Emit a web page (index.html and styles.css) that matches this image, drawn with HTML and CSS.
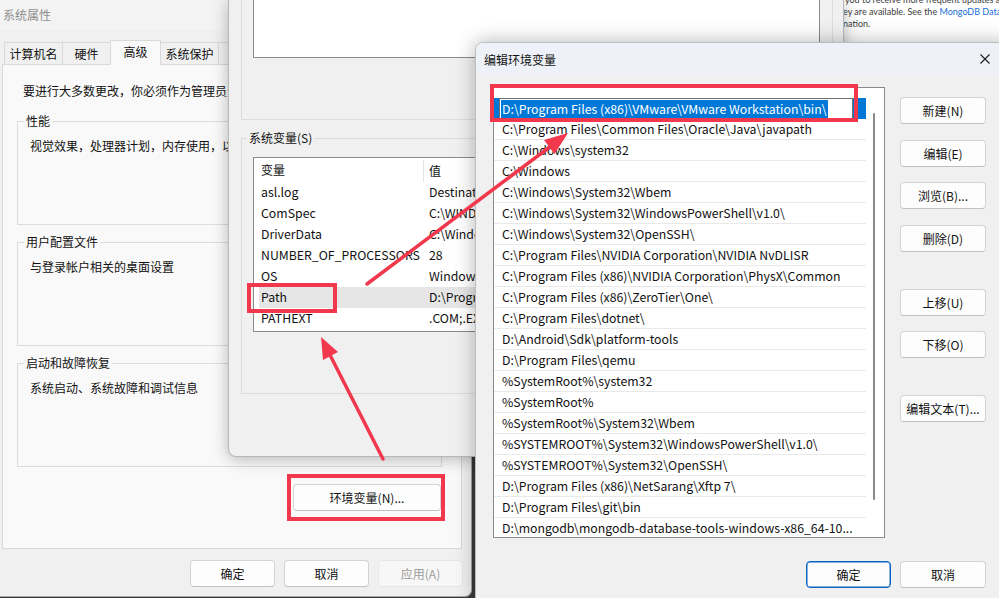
FILE: index.html
```html
<!DOCTYPE html>
<html lang="zh-CN">
<head>
<meta charset="utf-8">
<title>编辑环境变量</title>
<link rel="stylesheet" href="styles.css">
</head>
<body>
<div class="desk">

  <div class="win sys">
    <div class="sys-title">系统属性</div>
    <div class="tabs">
      <div class="tab t1">计算机名</div>
      <div class="tab t2">硬件</div>
      <div class="tab t3 active">高级</div>
      <div class="tab t4">系统保护</div>
      <div class="tab t5">远程</div>
    </div>
    <div class="panel">
      <div class="intro">要进行大多数更改，你必须作为管理员登录。</div>
      <div class="group first">
        <div class="legend">性能</div>
        <div class="gtext">视觉效果，处理器计划，内存使用，以及虚拟内存</div>
      </div>
      <div class="group">
        <div class="legend">用户配置文件</div>
        <div class="gtext">与登录帐户相关的桌面设置</div>
      </div>
      <div class="group">
        <div class="legend">启动和故障恢复</div>
        <div class="gtext">系统启动、系统故障和调试信息</div>
      </div>
      <div class="env-row">
        <div class="btn envbtn">环境变量(N)...</div>
      </div>
    </div>
    <div class="sys-foot">
      <div class="btn w85">确定</div>
      <div class="btn w85">取消</div>
      <div class="btn w85 disabled">应用(A)</div>
    </div>
  </div>

  <div class="win web">
    <div class="wl wl1">you to receive more frequent updates and</div>
    <div class="wl">ey are available. See the <span class="lnk">MongoDB Databa</span></div>
    <div class="wl">nation.</div>
  </div>

  <div class="win env">
    <div class="ugroup">
      <div class="ulist"></div>
    </div>
    <div class="sgroup">
      <div class="legend">系统变量(S)</div>
      <div class="slist">
        <div class="shead">
          <div class="c1">变量</div>
          <div class="c2">值</div>
        </div>
        <div class="srow"><div class="c1">asl.log</div><div class="c2">Destination=file</div></div>
        <div class="srow"><div class="c1">ComSpec</div><div class="c2">C:\WINDOWS\system32\cmd.exe</div></div>
        <div class="srow"><div class="c1">DriverData</div><div class="c2">C:\Windows\System32\Drivers\DriverData</div></div>
        <div class="srow"><div class="c1">NUMBER_OF_PROCESSORS</div><div class="c2">28</div></div>
        <div class="srow"><div class="c1">OS</div><div class="c2">Windows_NT</div></div>
        <div class="srow sel-row"><div class="c1">Path</div><div class="c2">D:\Program Files (x86)\VMware\VMware Workstation\bin\</div></div>
        <div class="srow"><div class="c1">PATHEXT</div><div class="c2">.COM;.EXE;.BAT;.CMD;.VBS;.VBE;.JS</div></div>
      </div>
    </div>
  </div>

  <div class="win edit">
    <div class="edit-title">
      <div class="etitle">编辑环境变量</div>
      <svg class="close" width="10" height="10" viewBox="0 0 10 10"><path d="M0.5 0.5 L9.5 9.5 M9.5 0.5 L0.5 9.5" stroke="#1b1b1b" stroke-width="1.1" fill="none"/></svg>
    </div>
    <div class="edit-main">
      <div class="plist">
        <div class="prows">
          <div class="prow editing"><div class="editbox"><span class="seltext">D:\Program Files (x86)\VMware\VMware Workstation\bin\</span></div></div>
          <div class="prow">C:\Program Files\Common Files\Oracle\Java\javapath</div>
          <div class="prow">C:\Windows\system32</div>
          <div class="prow">C:\Windows</div>
          <div class="prow">C:\Windows\System32\Wbem</div>
          <div class="prow">C:\Windows\System32\WindowsPowerShell\v1.0\</div>
          <div class="prow">C:\Windows\System32\OpenSSH\</div>
          <div class="prow">C:\Program Files\NVIDIA Corporation\NVIDIA NvDLISR</div>
          <div class="prow">C:\Program Files (x86)\NVIDIA Corporation\PhysX\Common</div>
          <div class="prow">C:\Program Files (x86)\ZeroTier\One\</div>
          <div class="prow">C:\Program Files\dotnet\</div>
          <div class="prow">D:\Android\Sdk\platform-tools</div>
          <div class="prow">D:\Program Files\qemu</div>
          <div class="prow">%SystemRoot%\system32</div>
          <div class="prow">%SystemRoot%</div>
          <div class="prow">%SystemRoot%\System32\Wbem</div>
          <div class="prow">%SYSTEMROOT%\System32\WindowsPowerShell\v1.0\</div>
          <div class="prow">%SYSTEMROOT%\System32\OpenSSH\</div>
          <div class="prow">D:\Program Files (x86)\NetSarang\Xftp 7\</div>
          <div class="prow">D:\Program Files\git\bin</div>
          <div class="prow">D:\mongodb\mongodb-database-tools-windows-x86_64-10...</div>
        </div>
        <div class="pscroll"></div>
      </div>
      <div class="ebtns">
        <div class="btn eb">新建(N)</div>
        <div class="btn eb m16">编辑(E)</div>
        <div class="btn eb m15">浏览(B)...</div>
        <div class="btn eb m16">删除(D)</div>
        <div class="btn eb m37">上移(U)</div>
        <div class="btn eb m15">下移(O)</div>
        <div class="btn eb m37">编辑文本(T)...</div>
      </div>
    </div>
    <div class="efoot">
      <div class="btn w85 primary">确定</div>
      <div class="btn w86">取消</div>
    </div>
  </div>

  <svg class="annot" width="999" height="598" viewBox="0 0 999 598">
    <g fill="none" stroke="#f2384c" stroke-width="4">
      <rect x="289" y="476" width="154" height="43"/>
      <rect x="249" y="285" width="86" height="26"/>
      <rect x="492" y="86" width="364" height="34"/>
    </g>
    <g stroke="#f2384c" stroke-width="3.5" stroke-linecap="round">
      <line x1="367" y1="284" x2="551" y2="146"/>
      <line x1="383" y1="459" x2="330" y2="355"/>
    </g>
    <g fill="#f2384c">
      <polygon points="568,133 554.5,154 544,140"/>
      <polygon points="321,337 338,352 323,360"/>
    </g>
  </svg>
</div>
</body>
</html>
```

FILE: styles.css
```css
* {
  box-sizing: border-box;
  margin: 0;
  padding: 0;
}

body {
  margin: 0;
  width: 999px;
  height: 598px;
  overflow: hidden;
  background: #3a3a3a;
  font-family: "Microsoft YaHei UI", "Noto Sans CJK SC", sans-serif;
  font-size: 12px;
  color: #111;
}

.desk {
  position: relative;
  width: 999px;
  height: 598px;
  overflow: hidden;
}

.win {
  position: absolute;
}

/* ---------- System properties ---------- */
.sys {
  left: 0;
  top: 0;
  width: 472px;
  height: 597px;
  background: #f0f0f0;
  border-right: 1px solid #a5a5a5;
  border-bottom: 1px solid #a5a5a5;
  border-radius: 0 0 7px 0;
}

.sys-title {
  height: 30px;
  line-height: 30px;
  padding-left: 3px;
  color: #8e8e8e;
  background: #f3f3f3;
}

.tabs {
  display: flex;
  align-items: flex-end;
  height: 34px;
  padding-left: 4px;
}

.tab {
  height: 22px;
  line-height: 21px;
  border: 1px solid #d9d9d9;
  border-bottom: none;
  margin-right: -1px;
  text-align: center;
  background: #f0f0f0;
  white-space: nowrap;
  overflow: hidden;
}

.t1 { width: 59px; }
.t2 { width: 49px; }
.t3 { width: 51px; }
.t4 { width: 59px; }
.t5 { width: 50px; }

.tab.active {
  height: 25px;
  line-height: 21px;
  margin-bottom: -1px;
  background: #f9f9f9;
  position: relative;
  z-index: 1;
}

.panel {
  margin-left: 2px;
  width: 460px;
  height: 485px;
  border: 1px solid #d9d9d9;
  background: #f9f9f9;
  padding: 16px 19px 0 14px;
}

.intro {
  line-height: 20px;
  padding-left: 6px;
  white-space: nowrap;
}

.group {
  border: 1px solid #dcdcdc;
  height: 104px;
  padding: 0 12px;
  margin-top: 17px;
}

.group.first {
  margin-top: 20px;
}

.legend {
  display: block;
  width: fit-content;
  margin-top: -9px;
  margin-left: -6px;
  padding: 0 2px;
  line-height: 16px;
  height: 16px;
  background: #f9f9f9;
  white-space: nowrap;
}

.gtext {
  margin-top: 7px;
  line-height: 20px;
  white-space: nowrap;
}

.env-row {
  display: flex;
  justify-content: flex-end;
  margin-top: 17px;
  padding-right: 1px;
}

.btn {
  height: 27px;
  border: 1px solid #d3d3d3;
  border-bottom-color: #c0c0c0;
  border-radius: 4px;
  background: #fdfdfd;
  display: flex;
  align-items: center;
  justify-content: center;
  white-space: nowrap;
}

.envbtn {
  width: 148px;
}

.w85 { width: 85px; }
.w86 { width: 86px; }

.btn.disabled {
  color: #9d9d9d;
  border-color: #e6e6e6;
  background: #f7f7f7;
}

.sys-foot {
  display: flex;
  justify-content: flex-end;
  gap: 9px;
  margin-top: 11px;
  padding-right: 8px;
}

/* ---------- Browser behind ---------- */
.web {
  left: 780px;
  top: 0;
  width: 219px;
  height: 60px;
  background: #fff;
  padding-left: 63px;
  font-family: "Lato", "Noto Sans", sans-serif;
  font-size: 9px;
  line-height: 12px;
  color: #3d3d3d;
  white-space: nowrap;
  overflow: hidden;
}

.wl1 {
  margin-top: -6px;
  padding-left: 2px;
}

.lnk {
  color: #1b6fd8;
}

/* ---------- Environment variables ---------- */
.env {
  left: 228px;
  top: 0;
  width: 616px;
  height: 457px;
  background: #f0f0f0;
  border-left: 1px solid #b8b8b8;
  border-right: 1px solid #b8b8b8;
  border-bottom: 1px solid #b8b8b8;
  border-radius: 0 0 8px 8px;
  box-shadow: 0 2px 16px rgba(0, 0, 0, 0.28);
  padding-left: 12px;
}

.ugroup {
  margin-top: -2px;
  width: 592px;
  height: 122px;
  border: 1px solid #dcdcdc;
  padding-left: 11px;
}

.ulist {
  width: 567px;
  height: 59px;
  background: #fff;
  border: 1px solid #8a8a8a;
  border-top: none;
}

.sgroup {
  margin-top: 18px;
  width: 592px;
  height: 256px;
  border: 1px solid #dcdcdc;
  padding: 0 11px;
}

.sgroup .legend {
  background: #f0f0f0;
  margin-left: -6px;
}

.slist {
  margin-top: 11px;
  width: 567px;
  height: 175px;
  background: #fff;
  border: 1px solid #8a8a8a;
  overflow: hidden;
}

.shead {
  display: flex;
  height: 24px;
  line-height: 23px;
}

.shead .c1 {
  width: 169px;
  padding-left: 7px;
}

.shead .c2 {
  margin-top: 2px;
  line-height: 21px;
  border-left: 1px solid #e3e3e3;
  padding-left: 5px;
}

.srow {
  display: flex;
  height: 21px;
  line-height: 21px;
  margin-left: 5px;
  padding-left: 2px;
  white-space: nowrap;
  font-size: 12.3px;
}

.srow .c1 {
  width: 168px;
  flex: none;
}

.srow .c2 {
  width: 46px;
  overflow: hidden;
}

.sel-row {
  background: #e6e6e6;
}

/* ---------- Edit environment variable ---------- */
.edit {
  left: 475px;
  top: 42px;
  width: 530px;
  height: 560px;
  background: #f0f0f0;
  border: 1px solid #bdbdbd;
  border-radius: 8px 0 0 0;
  box-shadow: 0 0 20px rgba(0, 0, 0, 0.3);
  overflow: hidden;
}

.edit-title {
  height: 32px;
  display: flex;
  align-items: center;
  padding-left: 8px;
  background: #eef2f8;
}

.close {
  margin-left: auto;
  margin-right: 14px;
}

.edit-main {
  display: flex;
  padding: 12px 0 0 17px;
}

.plist {
  display: flex;
  width: 392px;
  height: 451px;
  border: 1px solid #8a8a8a;
  background: #fff;
  padding-top: 10px;
  overflow: hidden;
}

.prows {
  width: 372px;
  flex: none;
}

.prow {
  height: 21px;
  line-height: 20px;
  border-bottom: 1px solid #e9e9e9;
  padding-left: 8px;
  white-space: nowrap;
  overflow: hidden;
  font-size: 12.3px;
}

.prow.editing {
  background: #0078d7;
  padding-left: 5px;
  border-bottom: none;
  overflow: visible;
}

.editbox {
  width: 354px;
  height: 22px;
  border: 1px solid #6e6e6e;
  background: #fff;
  padding: 1px;
  line-height: 18px;
}

.seltext {
  display: inline-block;
  background: #0078d7;
  color: #fff;
  padding: 0 1px;
  line-height: 18px;
}

.pscroll {
  margin-left: 7px;
  margin-top: 15px;
  width: 2px;
  height: 387px;
  background: #8a8a8a;
  border-radius: 1px;
}

.ebtns {
  display: flex;
  flex-direction: column;
  margin-left: 15px;
  padding-top: 10px;
}

.eb { width: 86px; }
.m15 { margin-top: 15px; }
.m16 { margin-top: 16px; }
.m37 { margin-top: 37px; }

.efoot {
  display: flex;
  justify-content: flex-end;
  gap: 9px;
  margin-top: 23px;
  padding-right: 18px;
}

.btn.primary {
  border: 1px solid #0a64c2;
  box-shadow: inset 0 0 0 0.5px #0a64c2;
}

/* ---------- Annotations ---------- */
.annot {
  position: absolute;
  left: 0;
  top: 0;
  pointer-events: none;
}
```
